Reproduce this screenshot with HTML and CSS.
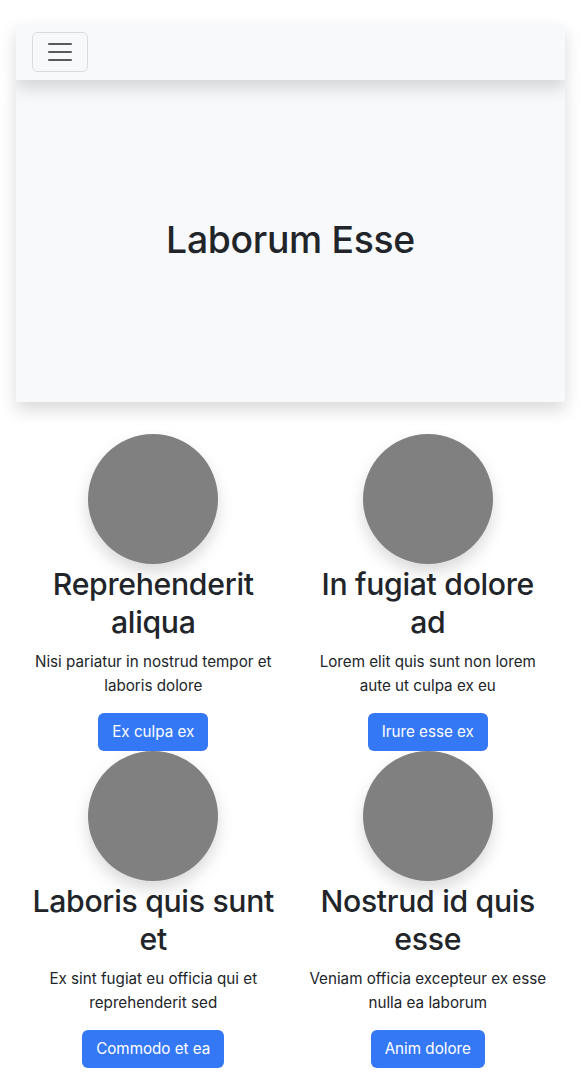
FILE: index.html
```html
<!DOCTYPE html>
<html lang="en">
<head>
<meta charset="utf-8">
<title>Laborum Esse</title>
<link rel="stylesheet" href="styles.css">
</head>
<body>
<div class="page">
  <nav class="navbar">
    <button class="toggler" aria-label="Toggle navigation">
      <svg width="30" height="30" viewBox="0 0 30 30"><path d="M4 7h22M4 15h22M4 23h22" stroke="rgba(33,37,41,0.75)" stroke-width="2" stroke-linecap="round" fill="none"/></svg>
    </button>
  </nav>
  <header class="hero">
    <h1>Laborum Esse</h1>
  </header>
  <section class="features">
    <div class="feature">
      <div class="circle"></div>
      <h2>Reprehenderit aliqua</h2>
      <p>Nisi pariatur in nostrud tempor et laboris dolore</p>
      <a class="btn">Ex culpa ex</a>
    </div>
    <div class="feature">
      <div class="circle"></div>
      <h2>In fugiat dolore ad</h2>
      <p>Lorem elit quis sunt non lorem aute ut culpa ex eu</p>
      <a class="btn">Irure esse ex</a>
    </div>
    <div class="feature">
      <div class="circle"></div>
      <h2>Laboris quis sunt et</h2>
      <p>Ex sint fugiat eu officia qui et reprehenderit sed</p>
      <a class="btn">Commodo et ea</a>
    </div>
    <div class="feature">
      <div class="circle"></div>
      <h2>Nostrud id quis esse</h2>
      <p>Veniam officia excepteur ex esse nulla ea laborum</p>
      <a class="btn">Anim dolore</a>
    </div>
  </section>
</div>
</body>
</html>
```

FILE: styles.css
```css
* { box-sizing: border-box; }
html, body { margin: 0; padding: 0; }
body {
  font-family: Inter, "Noto Sans", sans-serif;
  color: #212529;
  background: #fff;
  font-size: 16px;
  line-height: 1.5;
}
.page {
  padding: 24px 16px 0;
}
.navbar {
  background: #f8f9fa;
  padding: 8px 16px;
  display: flex;
  align-items: center;
  box-shadow: 0 8px 16px rgba(0,0,0,0.15);
  position: relative;
  z-index: 1;
}
.toggler {
  width: 56px;
  height: 40px;
  padding: 4px 12px;
  border: 1px solid rgba(0,0,0,0.12);
  border-radius: 6px;
  background: transparent;
  display: flex;
  align-items: center;
  justify-content: center;
}
.toggler svg { display: block; }
.hero {
  background: #f8f9fa;
  height: 322px;
  display: flex;
  align-items: center;
  justify-content: center;
  box-shadow: 0 8px 16px rgba(0,0,0,0.15);
}
.hero h1 {
  font-size: 37.3px;
  font-weight: 500;
  line-height: 1.2;
  margin: 0 0 2px;
  letter-spacing: -0.3px;
}
.features {
  display: grid;
  grid-template-columns: 1fr 1fr;
  margin-top: 32px;
}
.feature {
  padding: 0 12px;
  text-align: center;
  display: flex;
  flex-direction: column;
  align-items: center;
}
.circle {
  width: 130px;
  height: 130px;
  border-radius: 50%;
  background: #808080;
  box-shadow: 0 8px 16px rgba(0,0,0,0.15);
}
.feature h2 {
  font-size: 30.2px;
  font-weight: 500;
  line-height: 38.4px;
  margin: 1px 0 8px;
  letter-spacing: -0.3px;
}
.feature p {
  margin: 0 0 15px;
  font-size: 15.2px;
  line-height: 24px;
}
.btn {
  display: inline-block;
  background: #3478f6;
  color: #fff;
  border-radius: 6px;
  padding: 7px 14px;
  font-size: 15.2px;
  line-height: 24px;
  text-decoration: none;
  position: relative;
  z-index: 1;
}
```
